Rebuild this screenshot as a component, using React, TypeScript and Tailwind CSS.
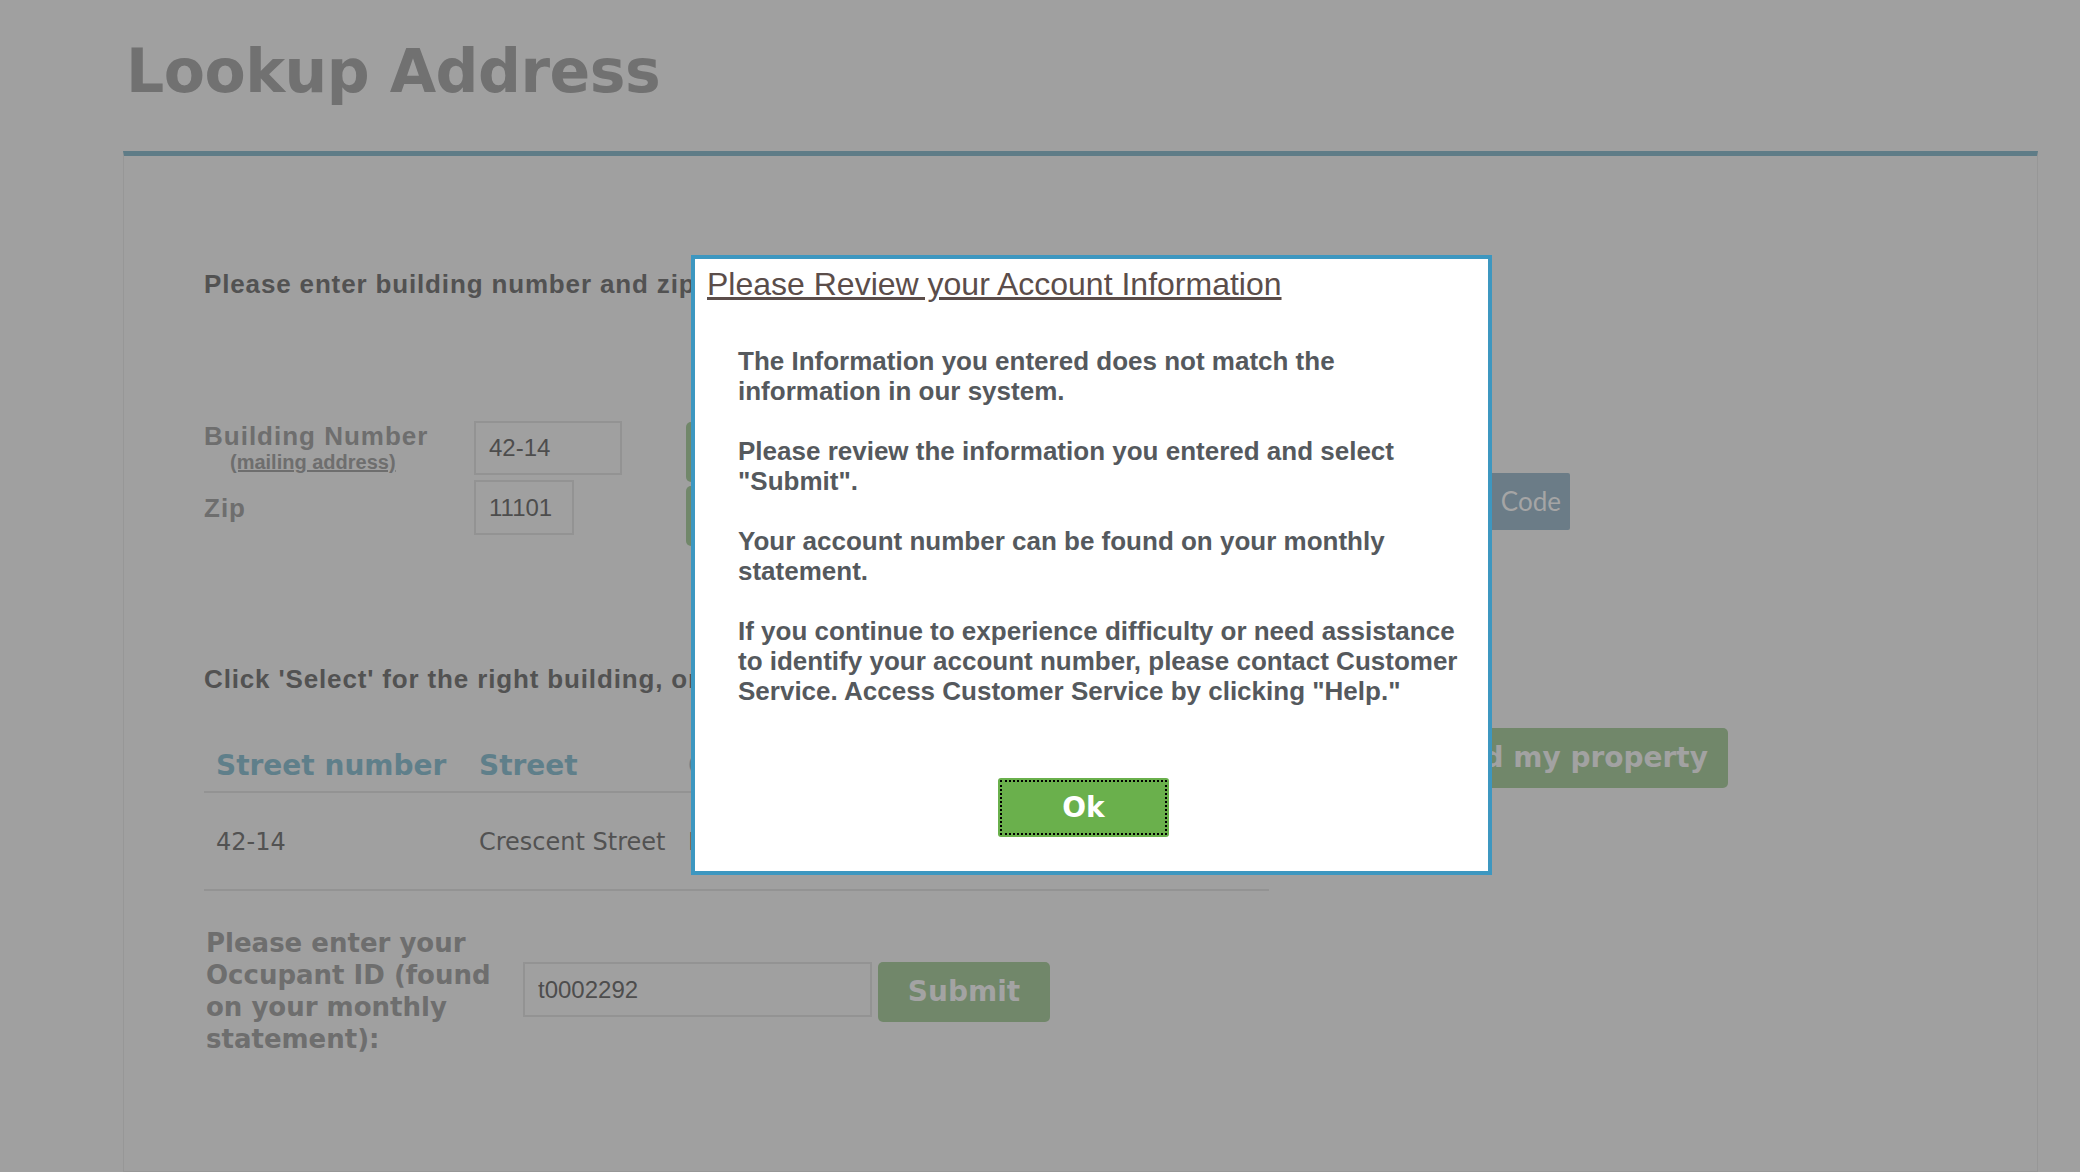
export default function App() {
  return (
    <div className="relative h-[1172px] w-[2080px] overflow-hidden bg-[#a0a0a0]">
      <h1 className="pl-[126px] pt-[41px] font-['DejaVu_Sans',Verdana,sans-serif] text-[60px] font-bold leading-[60px] tracking-[-0.5px] text-[#717171]">
        Lookup Address
      </h1>

      <div className="ml-[123px] mt-[50px] h-[1021px] w-[1915px] border-x border-b border-t-[5px] border-x-[#979797] border-b-[#979797] border-t-[#5f7c87] pl-[80px] pt-[113px]">
        <p className="whitespace-nowrap font-['Liberation_Sans',Arial,sans-serif] text-[26px] font-bold leading-[30px] tracking-[0.85px] text-[#525252]">
          Please enter building number and zip code
        </p>

        <div className="mt-[122px] flex items-start">
          <div className="w-[270px] font-['Liberation_Sans',Arial,sans-serif] font-bold text-[#6e6e6e]">
            <div className="text-[26px] leading-[30px] tracking-[1px]">Building Number</div>
            <div className="pl-[26px] text-[20px] leading-[22px] underline">(mailing address)</div>
            <div className="mt-[20px] text-[26px] leading-[30px] tracking-[1px]">Zip</div>
          </div>
          <div className="flex flex-col gap-[5px] font-['Liberation_Sans',Arial,sans-serif] text-[24px] text-[#4d4d4d]">
            <div className="flex h-[54px] w-[148px] items-center border-2 border-[#939393] pl-[13px]">42-14</div>
            <div className="flex h-[55px] w-[100px] items-center border-2 border-[#939393] pl-[13px]">11101</div>
          </div>
          <div className="ml-[64px] mt-px flex flex-col gap-[4px]">
            <div className="h-[60px] w-[170px] rounded-[5px] bg-[#71876a]" />
            <div className="h-[60px] w-[170px] rounded-[5px] bg-[#71876a]" />
          </div>
          <div className="ml-[454px] mt-[52px] flex h-[57px] w-[260px] items-center justify-end gap-[14px] rounded-[2px] bg-[#6b7c87] pr-[9px] font-['Lato',sans-serif] text-[26px] text-[#a5a5a5]">
            <span>Find Zip</span>
            <span>Code</span>
          </div>
        </div>

        <p className="mt-[118px] whitespace-nowrap font-['Liberation_Sans',Arial,sans-serif] text-[26px] font-bold leading-[30px] tracking-[0.85px] text-[#525252]">
          Click 'Select' for the right building, or 'I can't find my property'
        </p>

        <div className="mt-[34px] flex items-start">
          <div className="mt-[21px] w-[1065px]">
            <div className="flex border-b-2 border-[#939393] pb-[8px] font-['DejaVu_Sans',Verdana,sans-serif] text-[28px] font-bold leading-[34px] text-[#5f7f8a]">
              <div className="w-[263px] pl-[12px]">Street number</div>
              <div className="w-[209px] pl-[12px]">Street</div>
              <div className="pl-[12px]">City</div>
            </div>
            <div className="flex border-b-2 border-[#939393] pb-[32px] pt-[34px] font-['DejaVu_Sans',Verdana,sans-serif] text-[24px] leading-[30px] text-[#525252]">
              <div className="w-[263px] pl-[12px]">42-14</div>
              <div className="w-[209px] pl-[12px]">Crescent Street</div>
              <div className="pl-[12px]">Long Island City</div>
            </div>
          </div>
          <div className="ml-[102px] flex h-[60px] w-[357px] items-center justify-end whitespace-nowrap rounded-[5px] bg-[#71876a] pr-[20px] font-['DejaVu_Sans',Verdana,sans-serif] text-[28px] font-bold text-[#a2a2a2]">
            I can't find my property
          </div>
        </div>

        <div className="ml-[2px] mt-[36px] flex items-start">
          <div className="w-[317px]">
            <div className="w-[300px] font-['DejaVu_Sans',Verdana,sans-serif] text-[26px] font-bold leading-[32px] text-[#6e6e6e]">
              Please enter your Occupant ID (found on your monthly statement):
            </div>
          </div>
          <div className="mt-[35px] flex h-[55px] w-[349px] items-center border-2 border-[#939393] pl-[13px] font-['Liberation_Sans',Arial,sans-serif] text-[24px] text-[#4d4d4d]">
            t0002292
          </div>
          <div className="ml-[6px] mt-[35px] flex h-[60px] w-[172px] items-center justify-center rounded-[5px] bg-[#71876a] font-['DejaVu_Sans',Verdana,sans-serif] text-[28px] font-bold text-[#a3a3a3]">
            Submit
          </div>
        </div>
      </div>

      <div className="absolute left-[691px] top-[255px] h-[620px] w-[801px] border-4 border-[#3d97c0] bg-white">
        <div className="pl-[12px] pt-[7px] font-['Liberation_Sans',Arial,sans-serif] text-[32px] leading-[36px] text-[#5b4d4a] underline">
          Please Review your Account Information
        </div>
        <div className="ml-[43px] mt-[44px] w-[735px] font-['Liberation_Sans',Arial,sans-serif] text-[26px] font-bold leading-[30px] text-[#55595d]">
          <p>The Information you entered does not match the information in our system.</p>
          <p className="mt-[30px]">Please review the information you entered and select "Submit".</p>
          <p className="mt-[30px]">Your account number can be found on your monthly statement.</p>
          <p className="mt-[30px]">
            If you continue to experience difficulty or need assistance to identify your account number, please contact Customer Service. Access Customer Service by clicking "Help."
          </p>
        </div>
        <div className="ml-[303px] mt-[72px] flex h-[59px] w-[171px] items-center justify-center rounded-[3px] bg-[#6ab04c] font-['DejaVu_Sans',Verdana,sans-serif] text-[28px] font-bold text-white outline-2 outline-offset-[-4px] outline-black outline-dotted">
          Ok
        </div>
      </div>
    </div>
  );
}
